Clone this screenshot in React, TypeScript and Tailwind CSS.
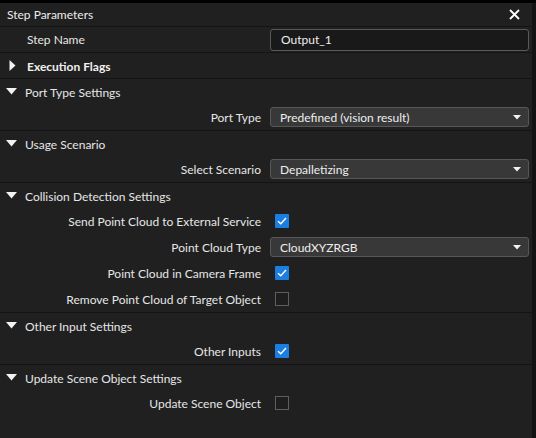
import type { ReactNode } from 'react';

function DownTri() {
  return (
    <svg width="11" height="7" viewBox="0 0 11 7" className="shrink-0">
      <path d="M0 0 H11 L5.5 6.5 Z" fill="#f2f2f2" />
    </svg>
  );
}

function RightTri() {
  return (
    <svg width="7" height="11" viewBox="0 0 7 11" className="shrink-0">
      <path d="M0.5 0 V11 L6.5 5.5 Z" fill="#f2f2f2" />
    </svg>
  );
}

function Row({ label, children }: { label: string; children?: ReactNode }) {
  return (
    <div className="flex h-[26px] items-center">
      <div className="w-[261px] shrink-0 pt-px text-right text-[#e6e6e6]">{label}</div>
      <div className="ml-[9px] flex flex-1 items-center pr-[4px]">{children}</div>
    </div>
  );
}

function Header({ title }: { title: string }) {
  return (
    <div className="flex h-[25px] items-center pl-[6px]">
      <DownTri />
      <span className="ml-[8px] pt-[2px] text-[#e6e6e6]">{title}</span>
    </div>
  );
}

function Group({ children }: { children: ReactNode }) {
  return <div className="border-b border-[#141414]">{children}</div>;
}

function Checkbox({ checked }: { checked?: boolean }) {
  if (checked) {
    return (
      <div className="ml-[5px] flex h-[14px] w-[14px] items-center justify-center rounded-[1px] bg-[#1c7ee0]">
        <svg width="10" height="8" viewBox="0 0 10 8">
          <path d="M1 4.2 L3.8 6.8 L9 1" fill="none" stroke="#ffffff" strokeWidth="1.4" />
        </svg>
      </div>
    );
  }
  return <div className="ml-[5px] h-[14px] w-[14px] border border-[#5e5e5e] bg-[#1e1e1e]" />;
}

function Select({ value }: { value: string }) {
  return (
    <div className="flex h-[20px] w-[259px] items-center justify-between rounded-[3px] border border-[#575757] bg-[#383838] pl-[9px] pr-[7px]">
      <span className="pt-px text-[#eeeeee]">{value}</span>
      <svg width="8" height="5" viewBox="0 0 8 5">
        <path d="M0 0 H8 L4 4.5 Z" fill="#f2f2f2" />
      </svg>
    </div>
  );
}

export default function App() {
  return (
    <div
      className="h-[438px] w-[536px] overflow-hidden bg-black text-[12px] leading-none"
      style={{ fontFamily: 'Lato, "Noto Sans", sans-serif' }}
    >
      <div className="flex h-full flex-col pt-[3px]">
        <div className="flex flex-1 flex-col bg-[#202020] pr-[4px] [box-shadow:inset_-4px_0_0_#131313]">
          <div className="flex h-[24px] items-center justify-between border-b border-[#141414] pl-[7px] pr-[12px]">
            <span className="text-[#ececec]">Step Parameters</span>
            <svg width="11" height="11" viewBox="0 0 11 11">
              <path d="M1 1 L10 10 M10 1 L1 10" stroke="#ffffff" strokeWidth="1.8" />
            </svg>
          </div>

          <Group>
            <div className="flex h-[25px] items-center">
              <div className="w-[261px] shrink-0 pl-[27px] pt-px text-[#e6e6e6]">Step Name</div>
              <div className="ml-[9px] flex h-[22px] w-[259px] items-center rounded-[3px] border border-[#595959] bg-[#191919] pl-[10px] pt-px text-[#eeeeee]">
                Output_1
              </div>
            </div>
          </Group>

          <Group>
            <div className="flex h-[25px] items-center pl-[9px]">
              <RightTri />
              <span className="ml-[11px] pt-[2px] font-bold text-[#f0f0f0]">Execution Flags</span>
            </div>
          </Group>

          <Group>
            <Header title="Port Type Settings" />
            <Row label="Port Type">
              <Select value="Predefined (vision result)" />
            </Row>
          </Group>

          <Group>
            <Header title="Usage Scenario" />
            <Row label="Select Scenario">
              <Select value="Depalletizing" />
            </Row>
          </Group>

          <Group>
            <Header title="Collision Detection Settings" />
            <Row label="Send Point Cloud to External Service">
              <Checkbox checked />
            </Row>
            <Row label="Point Cloud Type">
              <Select value="CloudXYZRGB" />
            </Row>
            <Row label="Point Cloud in Camera Frame">
              <Checkbox checked />
            </Row>
            <Row label="Remove Point Cloud of Target Object">
              <Checkbox />
            </Row>
          </Group>

          <Group>
            <Header title="Other Input Settings" />
            <Row label="Other Inputs">
              <Checkbox checked />
            </Row>
          </Group>

          <div>
            <Header title="Update Scene Object Settings" />
            <Row label="Update Scene Object">
              <Checkbox />
            </Row>
          </div>
        </div>
      </div>
    </div>
  );
}
